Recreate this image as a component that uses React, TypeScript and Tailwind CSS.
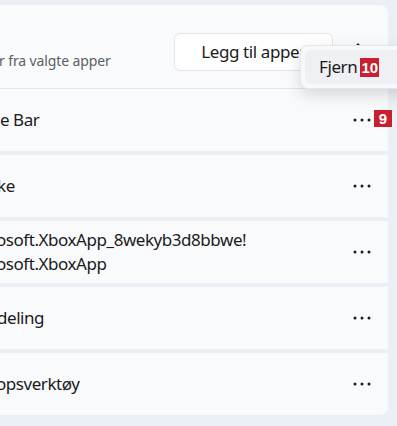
import React from 'react'

/* Utsnitt av Windows 11-innstillinger: app-liste med kontekstmeny */

const font = { fontFamily: '"Segoe UI", "Noto Sans", "Open Sans", sans-serif' }

function Badge({ children, className = '' }: { children: React.ReactNode; className?: string }) {
  return (
    <span
      className={`inline-flex items-center justify-center bg-[#c8202e] text-white font-bold leading-none ${className}`}
      style={{ fontFamily: '"Liberation Sans", Arial, sans-serif' }}
    >
      {children}
    </span>
  )
}

function Dots() {
  return (
    <svg width="18" height="4" viewBox="0 0 18 4" className="text-[#1b1b1b]">
      <circle cx="2" cy="2" r="1.5" fill="currentColor" />
      <circle cx="9" cy="2" r="1.5" fill="currentColor" />
      <circle cx="16" cy="2" r="1.5" fill="currentColor" />
    </svg>
  )
}

interface RowProps {
  lines: string[]
  offset: string
  last?: boolean
  badge?: string
}

function Row({ lines, offset, last = false, badge }: RowProps) {
  return (
    <div
      className={`h-[62px] bg-[#f9fafc] flex items-center justify-between ${last ? 'rounded-br-lg' : ''}`}
    >
      <div className={`text-[17px] leading-[24px] tracking-[-0.45px] text-[#1b1b1b] whitespace-nowrap ${offset}`}>
        {lines.map(l => (
          <div key={l}>{l}</div>
        ))}
      </div>
      <div className="relative flex items-center pr-[17px]">
        <Dots />
        {badge ? (
          <Badge className="absolute left-[21px] top-[-8px] w-[18px] h-[17px] text-[15px]">{badge}</Badge>
        ) : null}
      </div>
    </div>
  )
}

export default function App() {
  return (
    <div className="w-[397px] h-[426px] bg-[#ebf0f7] overflow-hidden relative" style={font}>
      <div className="pt-[5px] pr-[9px]">
        <div className="flex flex-col">
          {/* Header */}
          <div className="h-[84px] bg-[#f9fafc] rounded-tr-lg border-b border-[#e3e6ea] flex items-center justify-between">
            <div className="text-[14px] tracking-[-0.12px] text-[#5c5f63] mt-[28px] whitespace-nowrap -ml-[1px]">
              r fra valgte apper
            </div>
            <div className="flex items-center">
              <button className="w-[159px] h-[38px] mt-[10px] bg-white border border-[#e2e4e8] rounded-md text-[17px] tracking-[-0.4px] text-[#1b1b1b]">
                Legg til apper
              </button>
              <svg width="12" height="12" viewBox="0 0 12 12" className="ml-[19px] mr-[24px] -mt-[2px]">
                <path d="M2.5 7.5 L6 4 L9.5 7.5" fill="none" stroke="#1b1b1b" strokeWidth="1.2" strokeLinecap="round" strokeLinejoin="round" />
              </svg>
            </div>
          </div>

          <div className="flex flex-col gap-[4px]">
            <Row lines={['e Bar']} offset="ml-0" badge="9" />
            <Row lines={['ke']} offset="-ml-[3px]" />
            <Row lines={['osoft.XboxApp_8wekyb3d8bbwe!', 'osoft.XboxApp']} offset="-ml-[4px]" />
            <Row lines={['deling']} offset="-ml-[3px]" />
            <Row lines={['opsverktøy']} offset="-ml-[4px]" last />
          </div>
        </div>
      </div>

      {/* Kontekstmeny */}
      <div className="absolute left-[300px] top-[45px] w-[120px] h-[44px] rounded-lg bg-[#f7f8fa] border border-[#e4e6ea] shadow-[0_6px_16px_rgba(0,0,0,0.14)] p-[4px]">
        <div className="h-full rounded-md bg-[#eef0f3] flex items-center pl-[14px]">
          <span className="text-[17px] tracking-[-0.4px] text-[#1b1b1b]">Fjern</span>
          <Badge className="w-[19px] h-[19px] text-[15px] ml-[3px]">10</Badge>
        </div>
      </div>
    </div>
  )
}
